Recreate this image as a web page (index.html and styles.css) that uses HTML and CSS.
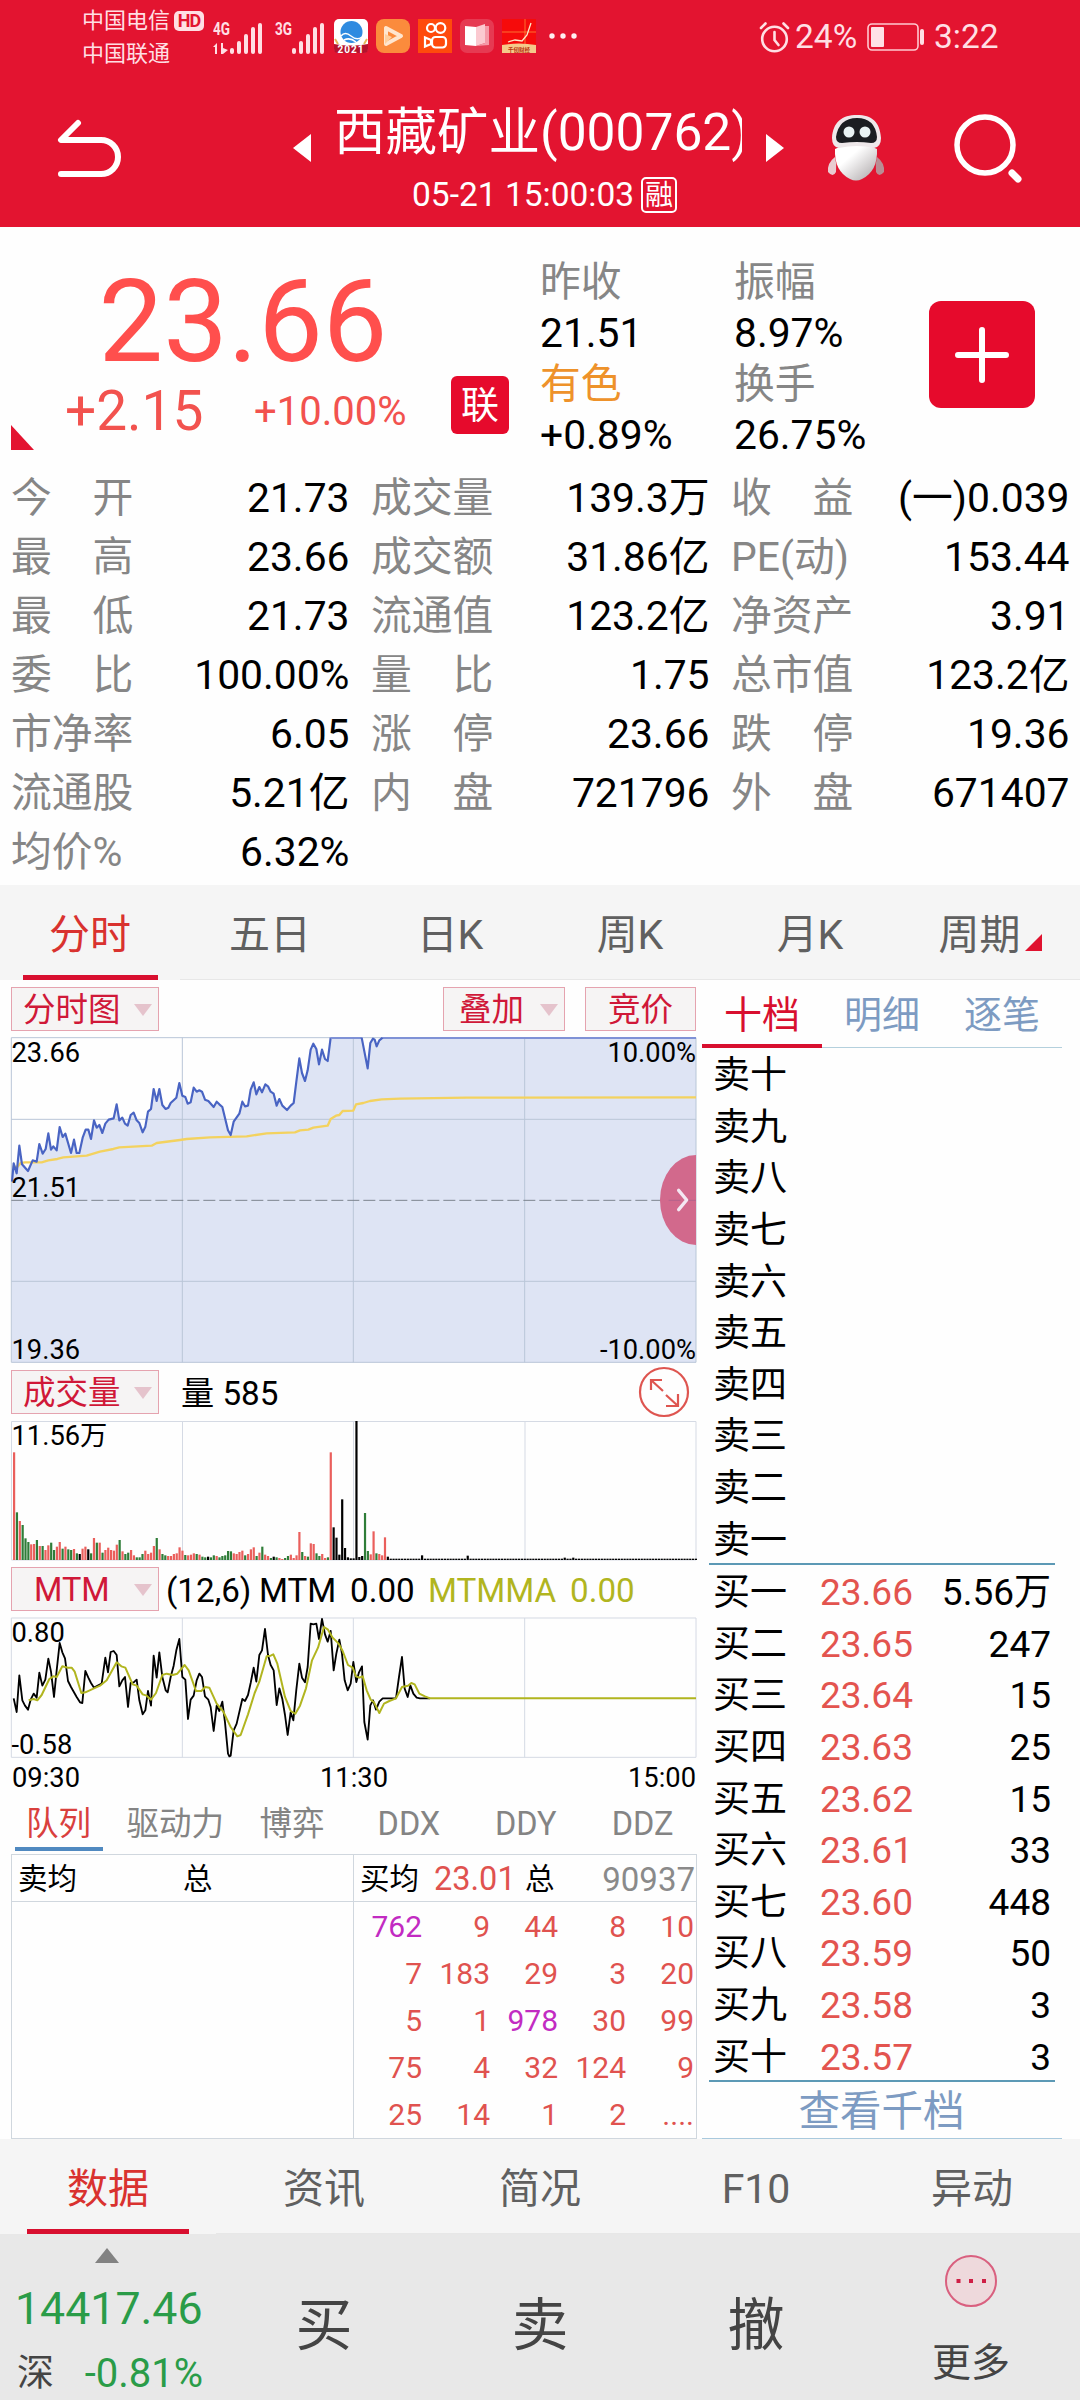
FILE: index.html
```html
<!DOCTYPE html>
<html lang="zh-CN">
<head>
<meta charset="utf-8">
<title>西藏矿业(000762)</title>
<link rel="stylesheet" href="styles.css">
</head>
<body>
<header class="header">
  <div class="status">
    <div class="carriers"><span>中国电信</span><span>中国联通</span></div>
    <span class="hd">HD</span>
    <svg class="signals" width="116" height="34" viewBox="0 0 116 34" fill="#ffdfe4">
      <text x="0" y="14" class="net" textLength="17" lengthAdjust="spacingAndGlyphs">4G</text>
      <path d="M0 26l4-4v11h-2v-7zM8 22h2v5l5 2-5 4h-2z"/>
      <rect x="17" y="27" width="4" height="6" rx="2"/><rect x="24" y="20" width="4" height="13" rx="2"/><rect x="31" y="13" width="4" height="20" rx="2"/><rect x="38" y="6" width="4" height="27" rx="2"/><rect x="45" y="2" width="4" height="31" rx="2"/>
      <text x="62" y="14" class="net" textLength="17" lengthAdjust="spacingAndGlyphs">3G</text>
      <rect x="79" y="27" width="4" height="6" rx="2"/><rect x="86" y="20" width="4" height="13" rx="2"/><rect x="93" y="13" width="4" height="20" rx="2"/><rect x="100" y="6" width="4" height="27" rx="2"/><rect x="107" y="2" width="4" height="31" rx="2"/>
    </svg>
    <div class="apps">
      <svg width="34" height="34" viewBox="0 0 34 34"><rect width="34" height="34" rx="5" fill="#fff"/><circle cx="17.500" cy="13" r="11" fill="#2f8be0"/><path d="M7 17q4-5 10 0t11 1" stroke="#fff" stroke-width="1.500" fill="none"/><path d="M10 21q6-3 12 2" stroke="#fff" stroke-width="1.500" fill="none"/><path d="M0 25q17 3 34 0v5q0 4-4 4H4q-4 0-4-4z" fill="#b5122d"/><text x="17" y="33.500" class="year">2021</text><path d="M1 20l3 5M33 20l-3 5" stroke="#e6b95a" stroke-width="2"/></svg>
      <svg width="34" height="34" viewBox="0 0 34 34"><rect width="34" height="34" rx="8" fill="#fb8b3c"/><path d="M10 9v16l15-8z" fill="#fb8b3c" stroke="#ffe6cf" stroke-width="4" stroke-linejoin="round"/><path d="M9 15l7 3-7 7z" fill="#ffcf9d"/></svg>
      <svg width="34" height="34" viewBox="0 0 34 34" fill="none" stroke="#fff" stroke-width="2.200"><rect width="34" height="34" fill="#ff4a0c" stroke="none"/><circle cx="13" cy="9" r="4"/><circle cx="22.500" cy="9" r="4.800"/><rect x="14" y="18" width="14" height="10.500" rx="3.500"/><path d="M13 21l-6-2.500v9l6-2.500z"/></svg>
      <svg width="34" height="34" viewBox="0 0 34 34"><rect width="34" height="34" rx="7" fill="#e63a52"/><path d="M5 7l11 1v19l-11-1z" fill="#fff"/><path d="M16 8l9-3v19l-9 3z" fill="#fbc9d0"/><path d="M25 7h4v19l-13 1 9-3z" fill="#f59aa8"/></svg>
      <svg width="34" height="34" viewBox="0 0 34 34"><rect width="34" height="34" fill="#f60b0b"/><path d="M0 13h34M23 0v25" stroke="#ff8a3a" stroke-width=".8"/><path d="M6 23l7-2 7 1 5-6 4-12" fill="none" stroke="#ffe9c9" stroke-width="1.300"/><path d="M0 26q17-3 34 0v8H0z" fill="#f5c98a"/><text x="17" y="33" class="seal">千仞财经</text></svg>
    </div>
    <svg class="more" width="28" height="8" viewBox="0 0 28 8" fill="#ffeef0"><circle cx="3" cy="4" r="2.700"/><circle cx="14" cy="4" r="2.700"/><circle cx="25" cy="4" r="2.700"/></svg>
    <div class="power">
      <svg width="31" height="32" viewBox="0 0 31 32" fill="none" stroke="#ffdfe4" stroke-width="2.600" stroke-linecap="round"><circle cx="15.500" cy="18" r="12.300"/><path d="M15.500 11v8l4 5"/><path d="M2 7l4.500-4.500M29 7l-4.500-4.500"/></svg>
      <span class="pct">24%</span>
      <svg class="battery" width="58" height="28" viewBox="0 0 58 28"><rect x="1" y="1" width="50" height="26" rx="4" fill="none" stroke="#ffc9d0" stroke-width="1.600"/><rect x="4" y="4" width="13" height="20" rx="1" fill="#ffe1e6"/><rect x="53" y="6" width="4" height="16" rx="2" fill="#ffdfe4"/></svg>
      <span>3:22</span>
    </div>
  </div>
  <div class="titlebar">
    <svg class="back" width="66" height="58" viewBox="0 0 66 58" fill="none" stroke="#fff" stroke-width="6" stroke-linecap="round" stroke-linejoin="round"><path d="M21 4L4 21h40a17 17 0 0 1 0 34H4"/></svg>
    <svg class="prev" width="20" height="30" viewBox="0 0 20 30"><path d="M19 1v28L1 15z" fill="#fff"/></svg>
    <div class="title">
      <div class="name">西藏矿业(000762)</div>
      <div class="time">05-21 15:00:03<span class="rong">融</span></div>
    </div>
    <svg class="next" width="20" height="30" viewBox="0 0 20 30"><path d="M1 1v28l18-14z" fill="#fff"/></svg>
    <svg class="robot" width="58" height="70" viewBox="0 0 58 70">
      <defs><linearGradient id="shell" x1="0" y1="0" x2="1" y2="1"><stop offset=".35" stop-color="#fff"/><stop offset="1" stop-color="#a9a3a5"/></linearGradient></defs>
      <path d="M8 44q-8 6-7 15 5 6 8 0 1-8-1-15z" fill="#e9ccd1"/><path d="M50 44q8 6 7 15-5 6-8 0-1-8 1-15z" fill="#b98d94"/>
      <path d="M8 36q21-10 42 0 1 22-15 30-6 3-12 0Q7 58 8 36z" fill="url(#shell)"/>
      <path d="M5 25C6 9 15 2 30 2s23 7 24 23q0 9-7 10-17-4-35 0-7-1-7-10z" fill="#eee8ea"/>
      <path d="M9 24Q12 5 30 5t20 19q0 6-6 6-14-2-29 0-6 0-6-6z" fill="#1b1e22"/>
      <circle cx="22" cy="19" r="5.500" fill="#e9f3f4"/><circle cx="38" cy="19" r="5.500" fill="#e9f3f4"/>
    </svg>
    <svg class="search" width="74" height="74" viewBox="0 0 74 74" fill="none" stroke="#fff"><circle cx="33" cy="33" r="28" stroke-width="5.500"/><path d="M60 61l6 6" stroke-width="7" stroke-linecap="round"/></svg>
  </div>
</header>

<section class="hero">
  <div class="quote">
    <div class="price">23.66</div>
    <div class="change"><span class="diff">+2.15</span><span class="rate">+10.00%</span><span class="link">联</span></div>
    <i class="corner"></i>
  </div>
  <div class="facts"><span>昨收</span><b>21.51</b><span class="sector">有色</span><b>+0.89%</b></div>
  <div class="facts"><span>振幅</span><b>8.97%</b><span>换手</span><b>26.75%</b></div>
  <div class="add"><svg width="54" height="56" viewBox="0 0 54 56" stroke="#fff" stroke-width="6" stroke-linecap="round"><path d="M3 28h48M27 3v50"/></svg></div>
</section>

<section class="stats">
  <div><span>今　开</span><b>21.73</b></div><div><span>成交量</span><b>139.3万</b></div><div><span>收　益</span><b>(一)0.039</b></div>
  <div><span>最　高</span><b>23.66</b></div><div><span>成交额</span><b>31.86亿</b></div><div><span>PE(动)</span><b>153.44</b></div>
  <div><span>最　低</span><b>21.73</b></div><div><span>流通值</span><b>123.2亿</b></div><div><span>净资产</span><b>3.91</b></div>
  <div><span>委　比</span><b>100.00%</b></div><div><span>量　比</span><b>1.75</b></div><div><span>总市值</span><b>123.2亿</b></div>
  <div><span>市净率</span><b>6.05</b></div><div><span>涨　停</span><b>23.66</b></div><div><span>跌　停</span><b>19.36</b></div>
  <div><span>流通股</span><b>5.21亿</b></div><div><span>内　盘</span><b>721796</b></div><div><span>外　盘</span><b>671407</b></div>
  <div><span>均价%</span><b>6.32%</b></div>
</section>

<nav class="tabs periods">
  <a class="on">分时</a><a>五日</a><a>日K</a><a>周K</a><a>月K</a><a>周期<svg width="17" height="17" viewBox="0 0 17 17"><path d="M17 0v17H0z" fill="#e0122f"/></svg></a>
</nav>

<main class="main">
  <div class="charts">
    <div class="tools first"><span class="btn pick">分时图<i></i></span><span class="btn pick over">叠加<i></i></span><span class="btn bid">竞价</span></div>
    <div class="chart price-chart">
      <svg width="687" height="327" viewBox="0 0 687 327">
        <g transform="scale(.33333) translate(-30 -186)" fill="none" stroke-linejoin="round">
          <path fill="#dee4f4" d="M36 620 41 565 50 595 58 512 66 568 84 588 98 556 110 560 118 507 128 536 137 522 145 475 153 524 160 514 170 526 179 456 188 486 196 476 213 534 222 494 230 534 238 534 248 488 257 464 265 464 273 492 282 436 290 458 298 450 307 474 316 446 326 434 341 430 350 388 358 436 367 428 375 446 383 452 392 420 401 413 410 436 418 444 428 472 436 455 444 410 453 402 461 342 470 378 478 342 487 390 497 402 505 398 512 384 529 368 538 324 547 362 556 366 563 386 572 382 581 338 590 350 598 346 606 350 615 374 625 378 641 396 650 380 658 388 667 396 684 466 692 480 701 440 718 416 727 380 735 394 744 392 752 344 761 322 769 358 778 336 786 352 796 328 804 334 812 350 821 356 830 392 838 372 847 392 861 405 872 392 881 384 889 320 898 250 906 294 915 318 923 286 932 224 940 206 949 222 957 268 966 224 975 252 983 258 992 188 1085 188 1103 280 1111 204 1119 191 1124 194 1130 214 1138 196 1148 188 2088 188V1162H36z"/>
          <path stroke="#b9c6d8" stroke-width="3" d="M34 188H2088V1162H34zM34 433H2088M34 919H2088M547 188V1162M1060 188V1162M1574 188V1162"/>
          <path stroke="#7b848e" stroke-width="3" stroke-dasharray="36 12" d="M34 676H2088"/>
          <path stroke="#f3d25f" stroke-width="7" d="M38 575 52 576 62 564 75 562 125 562 145 556 172 552 190 547 260 542 300 530 340 522 358 517 455 512 470 504 540 495 560 492 630 487 740 484 800 475 885 472 900 466 925 464 940 458 983 452 992 432 1008 422 1018 420 1028 408 1060 407 1068 388 1090 384 1110 378 1145 373 1200 371 1400 368 2088 367"/>
          <path stroke="#4964c3" stroke-width="6.500" d="M36 620 41 565 50 595 58 512 66 568 84 588 98 556 110 560 118 507 128 536 137 522 145 475 153 524 160 514 170 526 179 456 188 486 196 476 213 534 222 494 230 534 238 534 248 488 257 464 265 464 273 492 282 436 290 458 298 450 307 474 316 446 326 434 341 430 350 388 358 436 367 428 375 446 383 452 392 420 401 413 410 436 418 444 428 472 436 455 444 410 453 402 461 342 470 378 478 342 487 390 497 402 505 398 512 384 529 368 538 324 547 362 556 366 563 386 572 382 581 338 590 350 598 346 606 350 615 374 625 378 641 396 650 380 658 388 667 396 684 466 692 480 701 440 718 416 727 380 735 394 744 392 752 344 761 322 769 358 778 336 786 352 796 328 804 334 812 350 821 356 830 392 838 372 847 392 861 405 872 392 881 384 889 320 898 250 906 294 915 318 923 286 932 224 940 206 949 222 957 268 966 224 975 252 983 258 992 188"/>
          <path stroke="#7f92d6" stroke-width="6" d="M992 189H1085M1148 189H2088"/>
          <path stroke="#4964c3" stroke-width="6.500" d="M1085 188 1103 280 1111 204 1119 191 1124 194 1130 214 1138 196 1148 188"/>
          <path fill="#d2698c" d="M2088 540A108 135 0 0 0 2088 810z"/>
          <path stroke="#b5628c" stroke-width="3" stroke-dasharray="36 12" d="M2006 676H2088"/>
          <path stroke="#f4e7f2" stroke-width="10" stroke-linecap="round" d="M2036 646 2060 675 2036 704"/>
        </g>
      </svg>
      <span class="lab hi">23.66</span><span class="lab mid">21.51</span><span class="lab lo">19.36</span>
      <span class="lab hi right">10.00%</span><span class="lab lo right">-10.00%</span>
    </div>
    <div class="tools"><span class="btn pick">成交量<i></i></span><span class="vol">量 585</span>
      <svg class="expand" width="52" height="52" viewBox="0 0 52 52" fill="none" stroke="#de5550" stroke-width="2.200"><circle cx="26" cy="26" r="24"/><path d="M13 24V14H24M13 14 25 25M28 29 40 40M40 28V40H28"/></svg>
    </div>
    <div class="chart vol-chart">
      <svg width="687" height="141" viewBox="0 0 687 141">
        <path fill="none" stroke="#d5dae4" d="M1.500 1.500H686V140H1.500zM172.500 1V140M343.500 1V140M515 1V140"/>
        <g id="bars"></g>
      </svg>
      <span class="lab hi">11.56万</span>
    </div>
    <div class="tools"><span class="btn pick mtm">MTM<i></i></span><span class="params">(12,6)</span><span class="p1">MTM</span><span class="p2">0.00</span><span class="p3">MTMMA</span><span class="p4">0.00</span></div>
    <div class="chart mtm-chart">
      <svg width="687" height="142" viewBox="0 0 687 142">
        <g transform="scale(.33333) translate(-30 -770)" fill="none" stroke-linejoin="round">
          <path stroke="#d5dae4" stroke-width="3" d="M34 773H2088V1191H34zM547 773V1191M1060 773V1191M1574 773V1191"/>
          <path stroke="#000" stroke-width="5.500" d="M41 1014 50 1055 58 945 67 1020 75 1036 84 1048 92 1018 101 1000 110 1012 118 937 127 976 136 958 145 895 153 934 162 1010 170 930 179 848 187 876 195 894 204 962 213 980 230 1010 240 1026 247 1028 256 932 265 952 273 968 282 982 305 970 316 892 324 936 332 875 341 872 350 884 358 978 367 960 375 950 384 1040 392 968 401 966 410 958 418 1020 428 1062 436 1050 444 992 453 1036 461 886 470 952 478 876 487 950 497 990 503 996 512 950 521 916 529 870 538 836 547 950 556 958 564 1076 572 1018 581 1006 590 960 598 940 606 950 615 1008 625 1018 632 1040 641 1112 650 1036 658 1052 667 1024 675 1086 684 1180 688 1188 692 1186 701 1110 710 1090 727 1016 735 1022 744 1004 752 968 761 922 769 964 778 884 786 870 795 806 804 884 812 914 821 930 830 1034 838 984 847 1016 855 1064 863 1124 872 1056 880 1080 889 988 898 910 906 952 915 966 923 920 932 790 940 792 949 790 957 836 966 776 975 822 983 844 992 812 1001 930 1009 880 1018 838 1026 880 1034 960 1043 990 1052 970 1060 905 1069 965 1077 936 1086 918 1093 1085 1103 1138 1111 1035 1119 1020 1128 1048 1138 1024 1148 1014 1188 1014 1197 950 1206 890 1214 985 1223 1010 1231 975 1240 1000 1250 1012 1260 1014 1290 1014"/>
          <path stroke="#b1b51f" stroke-width="6" d="M86 1020 101 1016 112 1020 125 1004 148 956 160 948 170 950 187 918 204 922 215 922 224 934 244 998 256 996 300 976 320 960 350 906 364 918 376 922 398 972 410 976 428 1002 440 1006 453 1018 468 998 487 944 500 940 518 944 532 940 554 914 566 930 588 992 604 992 616 980 628 982 650 1030 670 1054 692 1100 712 1128 722 1124 744 1062 764 998 778 964 800 888 812 886 820 882 832 910 855 1010 872 1052 886 1060 900 1036 918 984 936 900 954 862 972 800 984 808 998 832 1016 850 1028 872 1044 914 1058 922 1068 948 1078 952 1088 948 1100 990 1112 1018 1122 1026 1138 1058 1152 1030 1168 1022 1188 1014 1206 980 1224 976 1234 968 1244 972 1258 1000 1275 1008 1290 1014 2088 1014"/>
        </g>
      </svg>
      <span class="lab hi">0.80</span><span class="lab lo">-0.58</span>
    </div>
    <div class="hours"><span>09:30</span><span>11:30</span><span>15:00</span></div>
    <nav class="subtabs"><a class="on">队列</a><a>驱动力</a><a>博弈</a><a>DDX</a><a>DDY</a><a>DDZ</a></nav>
    <div class="queue">
      <div class="side"><div class="sum"><span>卖均</span><em></em><span>总</span></div></div>
      <div class="side">
        <div class="sum"><span>买均</span><em>23.01</em><span>总</span><u>90937</u></div>
        <div class="cells">
          <span class="big">762</span><span>9</span><span>44</span><span>8</span><span>10</span>
          <span>7</span><span>183</span><span>29</span><span>3</span><span>20</span>
          <span>5</span><span>1</span><span class="big">978</span><span>30</span><span>99</span>
          <span>75</span><span>4</span><span>32</span><span>124</span><span>9</span>
          <span>25</span><span>14</span><span>1</span><span>2</span><span>....</span>
        </div>
      </div>
    </div>
  </div>

  <aside class="book">
    <nav class="booktabs"><a class="on">十档</a><a>明细</a><a>逐笔</a></nav>
    <div class="rows sell">
      <div>卖十</div><div>卖九</div><div>卖八</div><div>卖七</div><div>卖六</div><div>卖五</div><div>卖四</div><div>卖三</div><div>卖二</div><div>卖一</div>
    </div>
    <div class="rows buy">
      <div>买一<em>23.66</em><b>5.56万</b></div>
      <div>买二<em>23.65</em><b>247</b></div>
      <div>买三<em>23.64</em><b>15</b></div>
      <div>买四<em>23.63</em><b>25</b></div>
      <div>买五<em>23.62</em><b>15</b></div>
      <div>买六<em>23.61</em><b>33</b></div>
      <div>买七<em>23.60</em><b>448</b></div>
      <div>买八<em>23.59</em><b>50</b></div>
      <div>买九<em>23.58</em><b>3</b></div>
      <div>买十<em>23.57</em><b>3</b></div>
    </div>
    <a class="deep">查看千档</a>
  </aside>
</main>

<nav class="tabs infos"><a class="on">数据</a><a>资讯</a><a>简况</a><a>F10</a><a>异动</a></nav>

<footer class="trade">
  <div class="index">
    <svg width="24" height="15" viewBox="0 0 24 15"><path d="M12 0l12 15H0z" fill="#828282"/></svg>
    <div class="points">14417.46</div>
    <div class="market"><span>深</span><em>-0.81%</em></div>
  </div>
  <a>买</a><a>卖</a><a>撤</a>
  <div class="etc">
    <svg width="54" height="54" viewBox="0 0 54 54"><circle cx="27" cy="27" r="25" fill="#eed9dc" stroke="#d9607f" stroke-width="2"/><path d="M12.500 25h4v4h-4zM25 25h4v4h-4zM38 25h4v4h-4z" fill="#cf1f45"/></svg>
    <span>更多</span>
  </div>
</footer>
<script src="app.js"></script>
</body>
</html>
```
FILE: styles.css
```css
* { box-sizing: border-box; }
body {
  margin: 0;
  width: 1080px;
  height: 2400px;
  overflow: hidden;
  background: #fefefe;
  color: #000;
  font-family: Roboto, "Noto Sans CJK SC", sans-serif;
  white-space: nowrap;
}
svg { display: block; flex: none; }
b, em, u, i { font-weight: 400; font-style: normal; text-decoration: none; }

/* header */
.header { height: 227px; background: #e31430; color: #fff; }
.status { height: 72px; display: flex; align-items: flex-start; padding: 4px 0 0 82px; color: #ffdfe4; }
.carriers { display: flex; flex-direction: column; width: 92px; font-size: 22px; line-height: 33px; }
.hd { width: 30px; height: 20px; margin-top: 7px; border-radius: 5px; background: #ffdfe4; color: #e31430; font-size: 18px; font-weight: 700; line-height: 20px; text-align: center; letter-spacing: -1px; }
.signals { margin: 17px 0 0 9px; }
.net { font-size: 19px; font-weight: 700; }
.apps { display: flex; gap: 8px; margin: 15px 0 0 5px; }
.year { font-size: 10px; font-weight: 700; fill: #fff; text-anchor: middle; letter-spacing: 1px; }
.seal { font-size: 5.5px; font-weight: 700; fill: #b8330f; text-anchor: middle; }
.more { margin: 28px 0 0 13px; }
.power { display: flex; align-items: center; height: 40px; margin: 13px 0 0 182px; font-size: 33.5px; line-height: 40px; }
.power .pct { margin-left: 5px; width: 72px; }
.power .battery { margin-right: 9px; }
.titlebar { height: 155px; display: flex; align-items: flex-start; }
.back { margin: 47px 0 0 57px; }
.prev { margin: 61px 0 0 169px; }
.title { width: 408px; margin: 28px 0 0 22px; overflow: hidden; }
.name { font-size: 51.5px; line-height: 65px; height: 64px; }
.time { display: flex; align-items: center; padding-left: 78px; font-size: 33.5px; line-height: 62px; }
.rong { width: 36px; height: 36px; margin-left: 7px; border: 2px solid #fff; border-radius: 5px; font-size: 28px; line-height: 33px; text-align: center; }
.next { margin: 61px 0 0 23px; }
.robot { margin: 41px 0 0 42px; }
.search { margin: 40px 0 0 67px; }

/* quote */
.hero { height: 241px; display: grid; grid-template-columns: 540px 194px 195px 1fr; }
.quote { position: relative; padding-top: 34px; }
.price { width: 486px; height: 120px; font-size: 115px; line-height: 121px; text-align: center; color: #ff4f4d; }
.change { display: flex; align-items: center; height: 60px; padding-left: 65px; color: #f2524e; }
.diff { width: 189px; font-size: 55px; line-height: 62px; }
.rate { width: 197px; font-size: 40px; line-height: 61px; }
.link { width: 58px; height: 58px; margin-top: -12px; border-radius: 6px; background: #e60a2c; color: #fff; font-size: 38px; line-height: 58px; text-align: center; }
.corner { position: absolute; left: 11px; top: 198px; border-left: 23px solid #e31430; border-top: 25px solid transparent; }
.facts { display: flex; flex-direction: column; padding-top: 30px; font-size: 40.8px; line-height: 51px; color: #868686; }
.facts b { color: #000; }
.facts .sector { color: #ee922a; }
.add { width: 106px; height: 107px; margin-top: 74px; border-radius: 12px; background: #e60a2c; display: flex; align-items: center; justify-content: center; }

.stats { height: 417px; display: grid; grid-template-columns: repeat(3, 360px); grid-auto-rows: 59px; align-content: start; padding-top: 1px; font-size: 40.8px; line-height: 59px; }
.stats div { display: flex; justify-content: space-between; padding: 0 10.5px 0 11px; }
.stats span { color: #868686; }

/* tab strips */
.tabs { display: flex; background: #f5f5f5; color: #606060; font-size: 41px; }
.tabs a { flex: 1; display: flex; justify-content: center; position: relative; border-bottom: 1px solid #e7e7e7; }
.tabs .on { color: #d9322f; border-color: transparent; }
.tabs .on::after { content: ""; position: absolute; left: 12.5%; right: 12.5%; bottom: -1px; height: 5px; background: #d80f2f; }
.periods { height: 95px; line-height: 100px; }
.periods svg { margin: 49px 0 0 4px; }
.infos { height: 95px; line-height: 101px; }

/* charts */
.main { display: flex; height: 1159px; }
.charts { width: 702px; }
.tools { display: flex; height: 57px; padding-left: 11px; align-items: flex-start; font-size: 33.2px; line-height: 47px; }
.tools.first { padding-top: 7px; }
.btn { height: 44px; border: 1px solid #e5a3af; background: #f6f4f4; color: #d01838; line-height: 45px; font-size: 32.5px; }
.tools:not(.first) { padding-top: 6px; }
.pick { width: 148px; display: flex; justify-content: space-between; align-items: flex-start; padding: 0 6px 0 11px; }
.pick i { margin-top: 16px; border: 9px solid transparent; border-top: 12px solid #e5c3cc; border-bottom: 0; }
.mtm { padding-left: 22px; }
.over { width: 122px; margin-left: 284px; padding-left: 15px; }
.bid { width: 111px; margin-left: 20px; text-align: center; }
.vol { width: 299px; margin-left: 22px; }
.expand { margin: -4px 0 -2px 158px; }
.params { width: 93px; margin-left: 7px; }
.p1 { width: 91px; }
.p2 { width: 78px; }
.p3, .p4 { color: #b1b51f; }
.p3 { width: 142px; }
.chart { position: relative; margin-left: 10px; }
.price-chart { height: 327px; }
.vol-chart { height: 141px; margin-top: -1px; }
.mtm-chart { height: 142px; margin-top: -1px; }
.lab { position: absolute; left: 1.5px; font-size: 27.3px; line-height: 30px; }
.lab.right { left: auto; right: 6px; }
.lab.hi { top: 1px; }
.lab.mid { top: 136px; }
.price-chart .lo { top: 298px; }
.mtm-chart .lo { top: 113px; }
.hours { display: flex; justify-content: space-between; padding: 0 6px 0 12px; height: 36px; font-size: 27.3px; line-height: 38px; }
.subtabs { display: flex; height: 59px; width: 701px; font-size: 32.5px; line-height: 58px; color: #848484; }
.subtabs a { flex: 1; text-align: center; position: relative; }
.subtabs .on { color: #d9403d; }
.subtabs .on::after { content: ""; position: absolute; left: 15px; right: 14px; bottom: 3px; height: 4px; background: #5089c0; }
.queue { display: flex; width: 686px; height: 285px; margin-left: 11px; border: 1px solid #d0d7de; }
.side { width: 341px; }
.side + .side { width: 343px; border-left: 1px solid #d0d7de; }
.sum { display: flex; height: 47px; border-bottom: 1px solid #d0d7de; padding: 0 0 0 6px; font-size: 29.5px; line-height: 49px; }
.sum em { width: 106px; padding-left: 15px; font-size: 32.5px; color: #e0524f; }
.sum u { flex: 1; text-align: right; padding-right: 1px; font-size: 33px; color: #8a8a8a; }
.cells { display: grid; grid-template-columns: repeat(5, 68px); grid-auto-rows: 47px; text-align: right; font-size: 30px; line-height: 49px; color: #e0524f; }
.cells .big { color: #c22bc2; }

/* order book */
.book { width: 360px; border-bottom: 1px solid #a9c9dd; }
.booktabs { display: flex; height: 68px; font-size: 38px; line-height: 70px; color: #7d9bc2; }
.booktabs a { flex: 1; text-align: center; border-bottom: 1px solid #b4d0dd; }
.booktabs .on { color: #d80f2f; border-bottom: 4px solid #d80f2f; }
.rows { margin: 0 7px; padding: 1px 4px 0; border-bottom: 2px solid #5c99b5; height: 517px; font-size: 37px; }
.rows div { display: flex; height: 51.65px; line-height: 53px; }
.rows em { width: 98px; margin-left: 33px; color: #e3544f; }
.rows b { flex: 1; text-align: right; }
.deep { display: block; height: 56px; font-size: 41.5px; line-height: 60px; text-align: center; color: #7d9bc2; padding-right: 1px; }

/* trade bar */
.trade { display: grid; grid-template-columns: repeat(5, 216px); height: 166px; background: #e8e8e8; color: #444; }
.trade a { font-size: 57px; line-height: 183px; text-align: center; }
.index { padding-top: 14px; }
.index svg { margin-left: 95px; }
.points { margin-top: 15px; padding-left: 15px; font-size: 44.7px; line-height: 62px; color: #2a9c48; }
.market { display: flex; justify-content: space-between; padding: 0 13px 0 17px; font-size: 37px; line-height: 68px; }
.market em { font-size: 40px; color: #2a9c48; }
.etc { display: flex; flex-direction: column; align-items: center; padding: 20px 2px 0 0; font-size: 39px; line-height: 60px; }
.etc span { margin-top: 25px; }
```
FILE: app.js
```js
// Minute volumes: r = rising, g = falling, k = unchanged; the number is the bar height.
const volumes = `r323 g143 r117 g105 g65 g54 r47 r48 g60 r42 g42 r30 r44 g52 g30 r40 r54 g34 r40 g32
g30 r33 g20 k18 r34 r40 k32 g20 r66 g52 r52 g22 r30 r37 r30 r28 r46 g60 r26 g18
g22 r30 r14 g8 g8 g18 r28 r18 r22 r42 g66 r32 g18 g14 r12 r12 r18 r20 r38 r28
g15 r14 r16 r20 g18 r16 g10 g8 k10 g8 g14 r12 g8 g12 g14 g27 g26 r20 r18 r24
r28 g14 r18 r32 r38 g12 r22 g40 r16 r12 g6 k10 g8 r6 r3 g6 g12 r16 r6 r14
r84 g24 r12 g10 r50 r48 g20 g12 r18 r6 g8 r323 k98 k67 k16 k182 k36 k8 k5 k5
k417 k9 k12 g141 g27 r17 r86 g20 r18 r14 r68 k10`.split(/\s+/);
while (volumes.length < 240) volumes.push("k4");
volumes[143] = "k14";
volumes[159] = "k13";
volumes[193] = volumes[196] = "k7";

const colors = { r: "#ea5f5c", g: "#2f7d38", k: "#000" };
const group = document.getElementById("bars");
volumes.forEach((v, i) => {
  const h = v.slice(1) / 3;
  const bar = document.createElementNS("http://www.w3.org/2000/svg", "rect");
  bar.setAttribute("x", (3 + i * 2.853).toFixed(2));
  bar.setAttribute("y", (140 - h).toFixed(2));
  bar.setAttribute("width", 2.2);
  bar.setAttribute("height", h.toFixed(2));
  bar.setAttribute("fill", colors[v[0]]);
  group.appendChild(bar);
});
```
